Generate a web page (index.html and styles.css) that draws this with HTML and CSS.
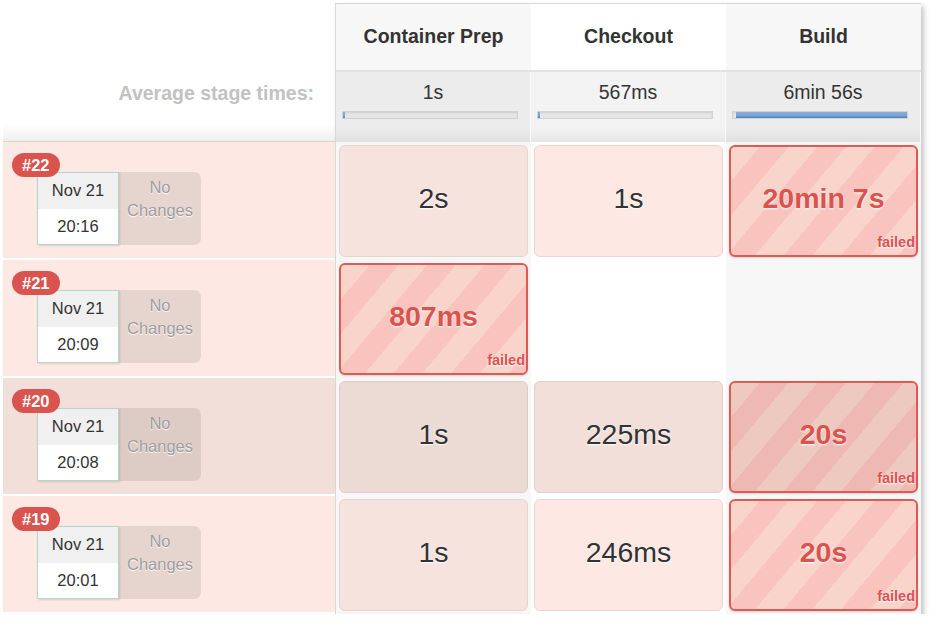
FILE: index.html
```html
<!DOCTYPE html>
<html>
<head>
<meta charset="utf-8">
<link rel="stylesheet" href="styles.css">
</head>
<body>
<div class="stage-view">
  <div class="runs">
    <div class="runs-head"><div class="avg-label">Average stage times:</div></div>
    <div class="run">
      <span class="badge">#22</span>
      <div class="run-info">
        <div class="date"><div class="day">Nov 21</div><div class="time">20:16</div></div>
        <div class="changes">No<br>Changes</div>
      </div>
    </div>
    <div class="run">
      <span class="badge">#21</span>
      <div class="run-info">
        <div class="date"><div class="day">Nov 21</div><div class="time">20:09</div></div>
        <div class="changes">No<br>Changes</div>
      </div>
    </div>
    <div class="run dark">
      <span class="badge">#20</span>
      <div class="run-info">
        <div class="date"><div class="day">Nov 21</div><div class="time">20:08</div></div>
        <div class="changes">No<br>Changes</div>
      </div>
    </div>
    <div class="run">
      <span class="badge">#19</span>
      <div class="run-info">
        <div class="date"><div class="day">Nov 21</div><div class="time">20:01</div></div>
        <div class="changes">No<br>Changes</div>
      </div>
    </div>
  </div>

  <div class="stages">
    <div class="names">
      <div class="name odd">Container Prep</div>
      <div class="name">Checkout</div>
      <div class="name odd">Build</div>
    </div>
    <div class="avgs">
      <div class="avg odd"><div class="avg-time">1s</div><div class="bar"><div class="fill" style="width:1%"></div></div></div>
      <div class="avg"><div class="avg-time">567ms</div><div class="bar"><div class="fill" style="width:1%"></div></div></div>
      <div class="avg odd"><div class="avg-time">6min 56s</div><div class="bar"><div class="fill" style="width:98%"></div></div></div>
    </div>

    <div class="row">
      <div class="cell odd"><div class="box ok">2s</div></div>
      <div class="cell"><div class="box ok">1s</div></div>
      <div class="cell odd"><div class="box failed">20min 7s<span class="status">failed</span></div></div>
    </div>
    <div class="row">
      <div class="cell odd"><div class="box failed">807ms<span class="status">failed</span></div></div>
      <div class="cell"></div>
      <div class="cell odd"></div>
    </div>
    <div class="row dark">
      <div class="cell odd"><div class="box ok">1s</div></div>
      <div class="cell"><div class="box ok">225ms</div></div>
      <div class="cell odd"><div class="box failed">20s<span class="status">failed</span></div></div>
    </div>
    <div class="row">
      <div class="cell odd"><div class="box ok">1s</div></div>
      <div class="cell"><div class="box ok">246ms</div></div>
      <div class="cell odd"><div class="box failed">20s<span class="status">failed</span></div></div>
    </div>
  </div>
</div>
</body>
</html>
```

FILE: styles.css
```css
* { box-sizing: border-box; }
html, body { margin: 0; padding: 0; background: #fff; }
body {
  font-family: "Liberation Sans", Arial, sans-serif;
  color: #333;
}
.stage-view {
  display: flex;
  align-items: flex-start;
  padding: 3px 0 0 3px;
}

/* left column */
.runs { width: 332px; }
.runs-head {
  height: 139px;
  border-bottom: 1px solid #d6d6d6;
  background: linear-gradient(to bottom, #fff 88%, #efefef 100%);
  padding: 78px 21px 0 0;
}
.avg-label {
  text-align: right;
  font-size: 19.5px;
  line-height: 24px;
  font-weight: bold;
  color: #c2c2c2;
}
.run {
  position: relative;
  height: 118px;
  background: #fde8e3;
  border-bottom: 2px solid #fff;
  padding: 30px 0 0 34px;
}
.run.dark { background: #f2dfda; }
.badge {
  position: absolute;
  left: 9px;
  top: 11px;
  z-index: 2;
  height: 24px;
  padding: 0 10px;
  border-radius: 12px;
  background: #d9534f;
  color: #fff;
  font-weight: bold;
  font-size: 16.5px;
  line-height: 24px;
}
.run-info { display: flex; }
.date {
  width: 82px;
  height: 73px;
  border: 1px solid #b4d8c6;
  box-shadow: 1px 1px 2px rgba(0,0,0,0.12);
  background: #fff;
  position: relative;
  z-index: 1;
}
.day, .time {
  height: 35.5px;
  font-size: 16.5px;
  line-height: 35px;
  text-align: center;
}
.day { background: #f0f0f0; }
.changes {
  width: 82px;
  height: 73px;
  background: #e6d4cf;
  border-radius: 0 7px 7px 0;
  color: #9e9e9e;
  font-size: 16.5px;
  line-height: 23px;
  padding-top: 4px;
  text-align: center;
  text-shadow: 0 1px 1px #fff;
}
.run.dark .changes { background: #ddcbc6; }

/* stage table */
.stages {
  width: 586px;
  border-top: 1px solid #d8d8d8;
  border-left: 1px solid #d8d8d8;
  box-shadow: 3px 3px 5px rgba(0,0,0,0.22);
}
.names, .avgs, .row { display: flex; }
.name {
  width: 195px;
  height: 66px;
  background: #fff;
  font-weight: bold;
  font-size: 19.5px;
  display: flex;
  align-items: center;
  justify-content: center;
  padding-bottom: 2px;
}
.name.odd { background: #f7f7f7; }
.avgs { border-top: 2px solid #e2e2e2; }
.avg {
  width: 195px;
  height: 70px;
  padding: 8px 6px 0 6px;
  background: linear-gradient(to bottom, #f3f3f3 80%, #e6e6e6 100%);
  border-right: 1px solid #fafafa;
}
.avg.odd { background: linear-gradient(to bottom, #ececec 80%, #e0e0e0 100%); }
.avg-time {
  text-align: center;
  font-size: 19.5px;
  line-height: 24px;
}
.bar {
  margin-top: 7px;
  width: 176px;
  height: 8px;
  background: #e6e6e6;
  border: 1px solid #d2d2d2;
  box-shadow: inset 0 1px 2px rgba(0,0,0,0.1);
  display: flex;
}
.fill {
  min-width: 2px;
  height: 100%;
  background: linear-gradient(to bottom, #8aaed8 0%, #7aa2d3 60%, #4a7fc9 100%);
  margin-left: auto;
}
.avg:not(.odd) .fill, .avg:first-child .fill { margin-left: 0; }

.row { height: 118px; }
.cell {
  width: 195px;
  padding: 3px;
  background: #fff;
}
.cell.odd { background: #f7f7f7; }
.box {
  position: relative;
  height: 112px;
  border-radius: 6px;
  border: 1px solid #ecd6d1;
  display: flex;
  align-items: center;
  justify-content: center;
  padding-bottom: 6px;
  font-size: 28.5px;
  color: #333;
  text-shadow: 0 1px 2px #fff;
}
.box.ok { background: #fde8e3; }
.cell.odd .box.ok { background: #f7e3de; border-color: #e8d4cf; }
.row.dark .box.ok { background: #f2dfda; border-color: #e4d0cb; }
.row.dark .cell.odd .box.ok { background: #ecdad5; border-color: #dfccc7; }
.box.failed {
  border: 2px solid #dd5a55;
  color: #d9534f;
  font-weight: bold;
  background: repeating-linear-gradient(130deg, #f8d4cb 0 22px, #f9c3be 22px 44px);
  box-shadow: 0 1px 2px rgba(0,0,0,0.15);
}
.row.dark .box.failed {
  background: repeating-linear-gradient(130deg, #eec9c0 0 22px, #efb9b3 22px 44px);
}
.status {
  position: absolute;
  right: 1px;
  bottom: 4px;
  font-size: 14.5px;
  line-height: 18px;
  font-weight: bold;
}
```
